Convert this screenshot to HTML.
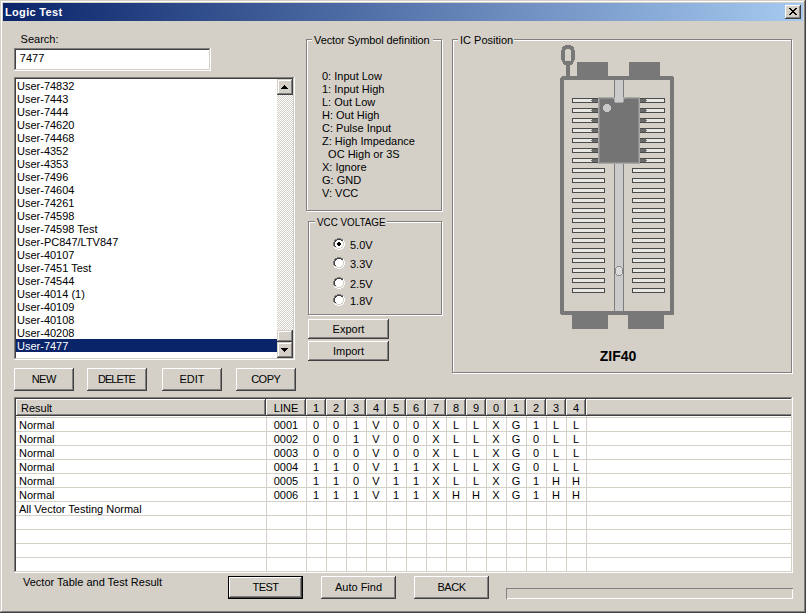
<!DOCTYPE html><html><head><meta charset="utf-8"><style>
html,body{margin:0;padding:0;width:806px;height:613px;overflow:hidden;background:#d4d0c8;}
#w div{position:absolute;box-sizing:border-box;}
.t{font-family:"Liberation Sans", sans-serif;font-size:11px;line-height:13px;white-space:pre;color:#000;}
</style></head><body><div id="w" style="position:relative;width:806px;height:613px;">
<div style="left:0px;top:0px;width:806px;height:613px;box-shadow:inset -1px -1px #404040,inset 1px 1px #d4d0c8,inset -2px -2px #808080,inset 2px 2px #fff;"></div>
<div style="left:3px;top:3px;width:800px;height:18px;background:linear-gradient(to right,#0a246a,#a6caf0);"></div>
<div class="t" style="left:5px;top:6px;font-weight:bold;color:#fff;letter-spacing:0.33px;">Logic Test</div>
<div style="left:785px;top:5px;width:16px;height:14px;background:#d4d0c8;box-shadow:inset -1px -1px #404040,inset 1px 1px #fff,inset -2px -2px #808080,inset 2px 2px #d4d0c8;"></div>
<svg style="position:absolute;left:789px;top:8px" width="8" height="7" shape-rendering="crispEdges"><path fill="#000" d="M0 0h2v1h-2zM6 0h2v1h-2zM1 1h2v1h-2zM5 1h2v1h-2zM2 2h4v1h-4zM3 3h2v1h-2zM2 4h4v1h-4zM1 5h2v1h-2zM5 5h2v1h-2zM0 6h2v1h-2zM6 6h2v1h-2z"/></svg>
<div class="t" style="left:20.6px;top:33px;">Search:</div>
<div style="left:14px;top:48px;width:197px;height:23px;background:#fff;box-shadow:inset -1px -1px #fff,inset 1px 1px #808080,inset -2px -2px #d4d0c8,inset 2px 2px #404040;"></div>
<div class="t" style="left:19.8px;top:52px;">7477</div>
<div style="left:14px;top:77px;width:281px;height:283px;background:#fff;box-shadow:inset -1px -1px #fff,inset 1px 1px #808080,inset -2px -2px #d4d0c8,inset 2px 2px #404040;"></div>
<div class="t" style="left:17px;top:80px;">User-74832</div>
<div class="t" style="left:17px;top:93px;">User-7443</div>
<div class="t" style="left:17px;top:106px;">User-7444</div>
<div class="t" style="left:17px;top:119px;">User-74620</div>
<div class="t" style="left:17px;top:132px;">User-74468</div>
<div class="t" style="left:17px;top:145px;">User-4352</div>
<div class="t" style="left:17px;top:158px;">User-4353</div>
<div class="t" style="left:17px;top:171px;">User-7496</div>
<div class="t" style="left:17px;top:184px;">User-74604</div>
<div class="t" style="left:17px;top:197px;">User-74261</div>
<div class="t" style="left:17px;top:210px;">User-74598</div>
<div class="t" style="left:17px;top:223px;">User-74598 Test</div>
<div class="t" style="left:17px;top:236px;">User-PC847/LTV847</div>
<div class="t" style="left:17px;top:249px;">User-40107</div>
<div class="t" style="left:17px;top:262px;">User-7451 Test</div>
<div class="t" style="left:17px;top:275px;">User-74544</div>
<div class="t" style="left:17px;top:288px;">User-4014 (1)</div>
<div class="t" style="left:17px;top:301px;">User-40109</div>
<div class="t" style="left:17px;top:314px;">User-40108</div>
<div class="t" style="left:17px;top:327px;">User-40208</div>
<div style="left:16px;top:339px;width:261px;height:13px;background:#0a246a;"></div>
<div class="t" style="left:17px;top:340px;color:#fff;">User-7477</div>
<div style="left:277px;top:95px;width:16px;height:235px;background-color:#fff;background-image:repeating-conic-gradient(#d4d0c8 0 25%,#fff 0 50%);background-size:2px 2px;"></div>
<div style="left:277px;top:79px;width:16px;height:16px;background:#d4d0c8;box-shadow:inset -1px -1px #404040,inset 1px 1px #d4d0c8,inset -2px -2px #808080,inset 2px 2px #fff;"></div>
<svg style="position:absolute;left:281px;top:85px" width="7" height="4" shape-rendering="crispEdges"><path fill="#000" d="M3 0h1v1h-1zM2 1h3v1h-3zM1 2h5v1h-5zM0 3h7v1h-7z"/></svg>
<div style="left:277px;top:330px;width:16px;height:12px;background:#d4d0c8;box-shadow:inset -1px -1px #404040,inset 1px 1px #d4d0c8,inset -2px -2px #808080,inset 2px 2px #fff;"></div>
<div style="left:277px;top:342px;width:16px;height:16px;background:#d4d0c8;box-shadow:inset -1px -1px #404040,inset 1px 1px #d4d0c8,inset -2px -2px #808080,inset 2px 2px #fff;"></div>
<svg style="position:absolute;left:281px;top:348px" width="7" height="4" shape-rendering="crispEdges"><path fill="#000" d="M0 0h7v1h-7zM1 1h5v1h-5zM2 2h3v1h-3zM3 3h1v1h-1z"/></svg>
<div style="left:14px;top:368px;width:60px;height:23px;background:#d4d0c8;box-shadow:inset -1px -1px #404040,inset 1px 1px #fff,inset -2px -2px #808080,inset 2px 2px #d4d0c8;"></div>
<div class="t" style="left:14px;width:60px;text-align:center;top:373px;letter-spacing:-0.5px;text-indent:-0.5px;">NEW</div>
<div style="left:87px;top:368px;width:60px;height:23px;background:#d4d0c8;box-shadow:inset -1px -1px #404040,inset 1px 1px #fff,inset -2px -2px #808080,inset 2px 2px #d4d0c8;"></div>
<div class="t" style="left:87px;width:60px;text-align:center;top:373px;letter-spacing:-1px;text-indent:-1px;">DELETE</div>
<div style="left:162px;top:368px;width:60px;height:23px;background:#d4d0c8;box-shadow:inset -1px -1px #404040,inset 1px 1px #fff,inset -2px -2px #808080,inset 2px 2px #d4d0c8;"></div>
<div class="t" style="left:162px;width:60px;text-align:center;top:373px;letter-spacing:0px;text-indent:0px;">EDIT</div>
<div style="left:236px;top:368px;width:60px;height:23px;background:#d4d0c8;box-shadow:inset -1px -1px #404040,inset 1px 1px #fff,inset -2px -2px #808080,inset 2px 2px #d4d0c8;"></div>
<div class="t" style="left:236px;width:60px;text-align:center;top:373px;letter-spacing:-0.5px;text-indent:-0.5px;">COPY</div>
<div style="left:307px;top:40px;width:136px;height:172px;border:1px solid #fff;"></div>
<div style="left:306px;top:39px;width:136px;height:172px;border:1px solid #808080;"></div>
<div style="left:312px;top:36px;width:121px;height:7px;background:#d4d0c8;"></div>
<div class="t" style="left:314px;top:34px;letter-spacing:-0.1px;">Vector Symbol definition</div>
<div class="t" style="left:322px;top:70px;">0: Input Low</div>
<div class="t" style="left:322px;top:83px;">1: Input High</div>
<div class="t" style="left:322px;top:96px;">L: Out Low</div>
<div class="t" style="left:322px;top:109px;">H: Out High</div>
<div class="t" style="left:322px;top:122px;">C: Pulse Input</div>
<div class="t" style="left:322px;top:135px;">Z: High Impedance</div>
<div class="t" style="left:322px;top:148px;">  OC High or 3S</div>
<div class="t" style="left:322px;top:161px;">X: Ignore</div>
<div class="t" style="left:322px;top:174px;">G: GND</div>
<div class="t" style="left:322px;top:187px;">V: VCC</div>
<div style="left:309px;top:222px;width:134px;height:94px;border:1px solid #fff;"></div>
<div style="left:308px;top:221px;width:134px;height:94px;border:1px solid #808080;"></div>
<div style="left:315px;top:218px;width:72px;height:7px;background:#d4d0c8;"></div>
<div class="t" style="left:317px;top:216px;transform:scaleX(0.895);transform-origin:0 0;">VCC VOLTAGE</div>
<svg style="position:absolute;left:333px;top:238px" width="12" height="12" shape-rendering="crispEdges"><path fill="#808080" d="M4 0h1v1h-1zM5 0h1v1h-1zM6 0h1v1h-1zM7 0h1v1h-1zM2 1h1v1h-1zM3 1h1v1h-1zM8 1h1v1h-1zM9 1h1v1h-1zM1 2h1v1h-1zM1 3h1v1h-1zM0 4h1v1h-1zM0 5h1v1h-1zM0 6h1v1h-1zM0 7h1v1h-1zM1 8h1v1h-1z"/><path fill="#404040" d="M4 1h1v1h-1zM5 1h1v1h-1zM6 1h1v1h-1zM7 1h1v1h-1zM2 2h1v1h-1zM3 2h1v1h-1zM8 2h1v1h-1zM9 2h1v1h-1zM2 3h1v1h-1zM1 4h1v1h-1zM1 5h1v1h-1zM1 6h1v1h-1zM1 7h1v1h-1zM2 8h1v1h-1z"/><path fill="#ffffff" d="M4 2h1v1h-1zM5 2h1v1h-1zM6 2h1v1h-1zM7 2h1v1h-1zM10 2h1v1h-1zM3 3h1v1h-1zM4 3h1v1h-1zM5 3h1v1h-1zM6 3h1v1h-1zM7 3h1v1h-1zM8 3h1v1h-1zM10 3h1v1h-1zM2 4h1v1h-1zM3 4h1v1h-1zM4 4h1v1h-1zM7 4h1v1h-1zM8 4h1v1h-1zM9 4h1v1h-1zM11 4h1v1h-1zM2 5h1v1h-1zM3 5h1v1h-1zM8 5h1v1h-1zM9 5h1v1h-1zM11 5h1v1h-1zM2 6h1v1h-1zM3 6h1v1h-1zM8 6h1v1h-1zM9 6h1v1h-1zM11 6h1v1h-1zM2 7h1v1h-1zM3 7h1v1h-1zM4 7h1v1h-1zM7 7h1v1h-1zM8 7h1v1h-1zM9 7h1v1h-1zM11 7h1v1h-1zM3 8h1v1h-1zM4 8h1v1h-1zM5 8h1v1h-1zM6 8h1v1h-1zM7 8h1v1h-1zM8 8h1v1h-1zM10 8h1v1h-1zM1 9h1v1h-1zM4 9h1v1h-1zM5 9h1v1h-1zM6 9h1v1h-1zM7 9h1v1h-1zM10 9h1v1h-1zM2 10h1v1h-1zM3 10h1v1h-1zM8 10h1v1h-1zM9 10h1v1h-1zM4 11h1v1h-1zM5 11h1v1h-1zM6 11h1v1h-1zM7 11h1v1h-1z"/><path fill="#d4d0c8" d="M9 3h1v1h-1zM10 4h1v1h-1zM10 5h1v1h-1zM10 6h1v1h-1zM10 7h1v1h-1zM9 8h1v1h-1zM2 9h1v1h-1zM3 9h1v1h-1zM8 9h1v1h-1zM9 9h1v1h-1zM4 10h1v1h-1zM5 10h1v1h-1zM6 10h1v1h-1zM7 10h1v1h-1z"/><path fill="#000000" d="M5 4h1v1h-1zM6 4h1v1h-1zM4 5h1v1h-1zM5 5h1v1h-1zM6 5h1v1h-1zM7 5h1v1h-1zM4 6h1v1h-1zM5 6h1v1h-1zM6 6h1v1h-1zM7 6h1v1h-1zM5 7h1v1h-1zM6 7h1v1h-1z"/></svg>
<div class="t" style="left:350px;top:239px;">5.0V</div>
<svg style="position:absolute;left:333px;top:257px" width="12" height="12" shape-rendering="crispEdges"><path fill="#808080" d="M4 0h1v1h-1zM5 0h1v1h-1zM6 0h1v1h-1zM7 0h1v1h-1zM2 1h1v1h-1zM3 1h1v1h-1zM8 1h1v1h-1zM9 1h1v1h-1zM1 2h1v1h-1zM1 3h1v1h-1zM0 4h1v1h-1zM0 5h1v1h-1zM0 6h1v1h-1zM0 7h1v1h-1zM1 8h1v1h-1z"/><path fill="#404040" d="M4 1h1v1h-1zM5 1h1v1h-1zM6 1h1v1h-1zM7 1h1v1h-1zM2 2h1v1h-1zM3 2h1v1h-1zM8 2h1v1h-1zM9 2h1v1h-1zM2 3h1v1h-1zM1 4h1v1h-1zM1 5h1v1h-1zM1 6h1v1h-1zM1 7h1v1h-1zM2 8h1v1h-1z"/><path fill="#ffffff" d="M4 2h1v1h-1zM5 2h1v1h-1zM6 2h1v1h-1zM7 2h1v1h-1zM10 2h1v1h-1zM3 3h1v1h-1zM4 3h1v1h-1zM5 3h1v1h-1zM6 3h1v1h-1zM7 3h1v1h-1zM8 3h1v1h-1zM10 3h1v1h-1zM2 4h1v1h-1zM3 4h1v1h-1zM4 4h1v1h-1zM5 4h1v1h-1zM6 4h1v1h-1zM7 4h1v1h-1zM8 4h1v1h-1zM9 4h1v1h-1zM11 4h1v1h-1zM2 5h1v1h-1zM3 5h1v1h-1zM4 5h1v1h-1zM5 5h1v1h-1zM6 5h1v1h-1zM7 5h1v1h-1zM8 5h1v1h-1zM9 5h1v1h-1zM11 5h1v1h-1zM2 6h1v1h-1zM3 6h1v1h-1zM4 6h1v1h-1zM5 6h1v1h-1zM6 6h1v1h-1zM7 6h1v1h-1zM8 6h1v1h-1zM9 6h1v1h-1zM11 6h1v1h-1zM2 7h1v1h-1zM3 7h1v1h-1zM4 7h1v1h-1zM5 7h1v1h-1zM6 7h1v1h-1zM7 7h1v1h-1zM8 7h1v1h-1zM9 7h1v1h-1zM11 7h1v1h-1zM3 8h1v1h-1zM4 8h1v1h-1zM5 8h1v1h-1zM6 8h1v1h-1zM7 8h1v1h-1zM8 8h1v1h-1zM10 8h1v1h-1zM1 9h1v1h-1zM4 9h1v1h-1zM5 9h1v1h-1zM6 9h1v1h-1zM7 9h1v1h-1zM10 9h1v1h-1zM2 10h1v1h-1zM3 10h1v1h-1zM8 10h1v1h-1zM9 10h1v1h-1zM4 11h1v1h-1zM5 11h1v1h-1zM6 11h1v1h-1zM7 11h1v1h-1z"/><path fill="#d4d0c8" d="M9 3h1v1h-1zM10 4h1v1h-1zM10 5h1v1h-1zM10 6h1v1h-1zM10 7h1v1h-1zM9 8h1v1h-1zM2 9h1v1h-1zM3 9h1v1h-1zM8 9h1v1h-1zM9 9h1v1h-1zM4 10h1v1h-1zM5 10h1v1h-1zM6 10h1v1h-1zM7 10h1v1h-1z"/></svg>
<div class="t" style="left:350px;top:258px;">3.3V</div>
<svg style="position:absolute;left:333px;top:277px" width="12" height="12" shape-rendering="crispEdges"><path fill="#808080" d="M4 0h1v1h-1zM5 0h1v1h-1zM6 0h1v1h-1zM7 0h1v1h-1zM2 1h1v1h-1zM3 1h1v1h-1zM8 1h1v1h-1zM9 1h1v1h-1zM1 2h1v1h-1zM1 3h1v1h-1zM0 4h1v1h-1zM0 5h1v1h-1zM0 6h1v1h-1zM0 7h1v1h-1zM1 8h1v1h-1z"/><path fill="#404040" d="M4 1h1v1h-1zM5 1h1v1h-1zM6 1h1v1h-1zM7 1h1v1h-1zM2 2h1v1h-1zM3 2h1v1h-1zM8 2h1v1h-1zM9 2h1v1h-1zM2 3h1v1h-1zM1 4h1v1h-1zM1 5h1v1h-1zM1 6h1v1h-1zM1 7h1v1h-1zM2 8h1v1h-1z"/><path fill="#ffffff" d="M4 2h1v1h-1zM5 2h1v1h-1zM6 2h1v1h-1zM7 2h1v1h-1zM10 2h1v1h-1zM3 3h1v1h-1zM4 3h1v1h-1zM5 3h1v1h-1zM6 3h1v1h-1zM7 3h1v1h-1zM8 3h1v1h-1zM10 3h1v1h-1zM2 4h1v1h-1zM3 4h1v1h-1zM4 4h1v1h-1zM5 4h1v1h-1zM6 4h1v1h-1zM7 4h1v1h-1zM8 4h1v1h-1zM9 4h1v1h-1zM11 4h1v1h-1zM2 5h1v1h-1zM3 5h1v1h-1zM4 5h1v1h-1zM5 5h1v1h-1zM6 5h1v1h-1zM7 5h1v1h-1zM8 5h1v1h-1zM9 5h1v1h-1zM11 5h1v1h-1zM2 6h1v1h-1zM3 6h1v1h-1zM4 6h1v1h-1zM5 6h1v1h-1zM6 6h1v1h-1zM7 6h1v1h-1zM8 6h1v1h-1zM9 6h1v1h-1zM11 6h1v1h-1zM2 7h1v1h-1zM3 7h1v1h-1zM4 7h1v1h-1zM5 7h1v1h-1zM6 7h1v1h-1zM7 7h1v1h-1zM8 7h1v1h-1zM9 7h1v1h-1zM11 7h1v1h-1zM3 8h1v1h-1zM4 8h1v1h-1zM5 8h1v1h-1zM6 8h1v1h-1zM7 8h1v1h-1zM8 8h1v1h-1zM10 8h1v1h-1zM1 9h1v1h-1zM4 9h1v1h-1zM5 9h1v1h-1zM6 9h1v1h-1zM7 9h1v1h-1zM10 9h1v1h-1zM2 10h1v1h-1zM3 10h1v1h-1zM8 10h1v1h-1zM9 10h1v1h-1zM4 11h1v1h-1zM5 11h1v1h-1zM6 11h1v1h-1zM7 11h1v1h-1z"/><path fill="#d4d0c8" d="M9 3h1v1h-1zM10 4h1v1h-1zM10 5h1v1h-1zM10 6h1v1h-1zM10 7h1v1h-1zM9 8h1v1h-1zM2 9h1v1h-1zM3 9h1v1h-1zM8 9h1v1h-1zM9 9h1v1h-1zM4 10h1v1h-1zM5 10h1v1h-1zM6 10h1v1h-1zM7 10h1v1h-1z"/></svg>
<div class="t" style="left:350px;top:278px;">2.5V</div>
<svg style="position:absolute;left:333px;top:294px" width="12" height="12" shape-rendering="crispEdges"><path fill="#808080" d="M4 0h1v1h-1zM5 0h1v1h-1zM6 0h1v1h-1zM7 0h1v1h-1zM2 1h1v1h-1zM3 1h1v1h-1zM8 1h1v1h-1zM9 1h1v1h-1zM1 2h1v1h-1zM1 3h1v1h-1zM0 4h1v1h-1zM0 5h1v1h-1zM0 6h1v1h-1zM0 7h1v1h-1zM1 8h1v1h-1z"/><path fill="#404040" d="M4 1h1v1h-1zM5 1h1v1h-1zM6 1h1v1h-1zM7 1h1v1h-1zM2 2h1v1h-1zM3 2h1v1h-1zM8 2h1v1h-1zM9 2h1v1h-1zM2 3h1v1h-1zM1 4h1v1h-1zM1 5h1v1h-1zM1 6h1v1h-1zM1 7h1v1h-1zM2 8h1v1h-1z"/><path fill="#ffffff" d="M4 2h1v1h-1zM5 2h1v1h-1zM6 2h1v1h-1zM7 2h1v1h-1zM10 2h1v1h-1zM3 3h1v1h-1zM4 3h1v1h-1zM5 3h1v1h-1zM6 3h1v1h-1zM7 3h1v1h-1zM8 3h1v1h-1zM10 3h1v1h-1zM2 4h1v1h-1zM3 4h1v1h-1zM4 4h1v1h-1zM5 4h1v1h-1zM6 4h1v1h-1zM7 4h1v1h-1zM8 4h1v1h-1zM9 4h1v1h-1zM11 4h1v1h-1zM2 5h1v1h-1zM3 5h1v1h-1zM4 5h1v1h-1zM5 5h1v1h-1zM6 5h1v1h-1zM7 5h1v1h-1zM8 5h1v1h-1zM9 5h1v1h-1zM11 5h1v1h-1zM2 6h1v1h-1zM3 6h1v1h-1zM4 6h1v1h-1zM5 6h1v1h-1zM6 6h1v1h-1zM7 6h1v1h-1zM8 6h1v1h-1zM9 6h1v1h-1zM11 6h1v1h-1zM2 7h1v1h-1zM3 7h1v1h-1zM4 7h1v1h-1zM5 7h1v1h-1zM6 7h1v1h-1zM7 7h1v1h-1zM8 7h1v1h-1zM9 7h1v1h-1zM11 7h1v1h-1zM3 8h1v1h-1zM4 8h1v1h-1zM5 8h1v1h-1zM6 8h1v1h-1zM7 8h1v1h-1zM8 8h1v1h-1zM10 8h1v1h-1zM1 9h1v1h-1zM4 9h1v1h-1zM5 9h1v1h-1zM6 9h1v1h-1zM7 9h1v1h-1zM10 9h1v1h-1zM2 10h1v1h-1zM3 10h1v1h-1zM8 10h1v1h-1zM9 10h1v1h-1zM4 11h1v1h-1zM5 11h1v1h-1zM6 11h1v1h-1zM7 11h1v1h-1z"/><path fill="#d4d0c8" d="M9 3h1v1h-1zM10 4h1v1h-1zM10 5h1v1h-1zM10 6h1v1h-1zM10 7h1v1h-1zM9 8h1v1h-1zM2 9h1v1h-1zM3 9h1v1h-1zM8 9h1v1h-1zM9 9h1v1h-1zM4 10h1v1h-1zM5 10h1v1h-1zM6 10h1v1h-1zM7 10h1v1h-1z"/></svg>
<div class="t" style="left:350px;top:295px;">1.8V</div>
<div style="left:308px;top:319px;width:81px;height:20px;background:#d4d0c8;box-shadow:inset -1px -1px #404040,inset 1px 1px #fff,inset -2px -2px #808080,inset 2px 2px #d4d0c8;"></div>
<div class="t" style="left:308px;width:81px;text-align:center;top:323px;">Export</div>
<div style="left:308px;top:341px;width:81px;height:20px;background:#d4d0c8;box-shadow:inset -1px -1px #404040,inset 1px 1px #fff,inset -2px -2px #808080,inset 2px 2px #d4d0c8;"></div>
<div class="t" style="left:308px;width:81px;text-align:center;top:345px;">Import</div>
<div style="left:453px;top:40px;width:340px;height:334px;border:1px solid #fff;"></div>
<div style="left:452px;top:39px;width:340px;height:334px;border:1px solid #808080;"></div>
<div style="left:458px;top:36px;width:56px;height:7px;background:#d4d0c8;"></div>
<div class="t" style="left:460px;top:34px;">IC Position</div>
<svg style="position:absolute;left:0;top:0" width="806" height="613" shape-rendering="crispEdges"><path fill="#787878" d="M565 45h6v1h-6zM563 46h10v1h-10zM562 47h12v1h-12zM562 48h12v1h-12zM562 49h4v1h-4zM570 49h4v1h-4zM561 50h4v1h-4zM571 50h4v1h-4zM561 51h4v1h-4zM571 51h4v1h-4zM561 52h4v1h-4zM571 52h4v1h-4zM561 53h4v1h-4zM571 53h4v1h-4zM561 54h4v1h-4zM571 54h4v1h-4zM561 55h4v1h-4zM571 55h4v1h-4zM561 56h4v1h-4zM571 56h4v1h-4zM561 57h4v1h-4zM571 57h4v1h-4zM561 58h4v1h-4zM571 58h4v1h-4zM561 59h4v1h-4zM571 59h4v1h-4zM562 60h3v1h-3zM571 60h3v1h-3zM562 61h12v1h-12zM563 62h10v1h-10zM563 63h10v1h-10zM564 64h8v1h-8z"/><rect x="566" y="65" width="4" height="11" fill="#787878"/><rect x="577" y="62" width="31" height="14" fill="#787878"/><rect x="629" y="62" width="31" height="14" fill="#787878"/><rect x="562" y="76" width="111" height="1" fill="#787878"/><rect x="561" y="77" width="113" height="3" fill="#787878"/><rect x="560" y="78" width="4" height="236" fill="#787878"/><rect x="670" y="77" width="4" height="237" fill="#787878"/><rect x="561" y="311" width="113" height="4" fill="#787878"/><rect x="560" y="311" width="113" height="3" fill="#787878"/><rect x="572" y="315" width="36" height="14" fill="#787878"/><rect x="628" y="315" width="36" height="14" fill="#787878"/><rect x="614" y="80" width="10" height="231" fill="#7c7c7c"/><rect x="615" y="80" width="8" height="231" fill="#cbcbcb"/><path fill="#8a8a8a" d="M617 266h4v1h-4zM616 267h1v1h-1zM621 267h1v1h-1zM615 268h1v1h-1zM622 268h1v1h-1zM615 269h1v1h-1zM622 269h1v1h-1zM615 270h1v1h-1zM622 270h1v1h-1zM615 271h1v1h-1zM622 271h1v1h-1zM615 272h1v1h-1zM622 272h1v1h-1zM615 273h1v1h-1zM622 273h1v1h-1zM616 274h1v1h-1zM621 274h1v1h-1zM617 275h4v1h-4z"/><path fill="#dadada" d="M615 267h1v1h-1zM617 267h4v1h-4zM622 267h1v1h-1zM616 268h6v1h-6zM616 269h6v1h-6zM616 270h6v1h-6zM616 271h6v1h-6zM616 272h6v1h-6zM616 273h6v1h-6zM615 274h1v1h-1zM617 274h4v1h-4zM622 274h1v1h-1z"/><rect x="572" y="98" width="33" height="5" fill="#4a4a4a"/><rect x="573" y="99" width="31" height="3" fill="#e8e6e0"/><rect x="632" y="98" width="33" height="5" fill="#4a4a4a"/><rect x="633" y="99" width="31" height="3" fill="#e8e6e0"/><rect x="572" y="108" width="33" height="5" fill="#4a4a4a"/><rect x="573" y="109" width="31" height="3" fill="#e8e6e0"/><rect x="632" y="108" width="33" height="5" fill="#4a4a4a"/><rect x="633" y="109" width="31" height="3" fill="#e8e6e0"/><rect x="572" y="118" width="33" height="5" fill="#4a4a4a"/><rect x="573" y="119" width="31" height="3" fill="#e8e6e0"/><rect x="632" y="118" width="33" height="5" fill="#4a4a4a"/><rect x="633" y="119" width="31" height="3" fill="#e8e6e0"/><rect x="572" y="128" width="33" height="5" fill="#4a4a4a"/><rect x="573" y="129" width="31" height="3" fill="#e8e6e0"/><rect x="632" y="128" width="33" height="5" fill="#4a4a4a"/><rect x="633" y="129" width="31" height="3" fill="#e8e6e0"/><rect x="572" y="138" width="33" height="5" fill="#4a4a4a"/><rect x="573" y="139" width="31" height="3" fill="#e8e6e0"/><rect x="632" y="138" width="33" height="5" fill="#4a4a4a"/><rect x="633" y="139" width="31" height="3" fill="#e8e6e0"/><rect x="572" y="148" width="33" height="5" fill="#4a4a4a"/><rect x="573" y="149" width="31" height="3" fill="#e8e6e0"/><rect x="632" y="148" width="33" height="5" fill="#4a4a4a"/><rect x="633" y="149" width="31" height="3" fill="#e8e6e0"/><rect x="572" y="158" width="33" height="5" fill="#4a4a4a"/><rect x="573" y="159" width="31" height="3" fill="#e8e6e0"/><rect x="632" y="158" width="33" height="5" fill="#4a4a4a"/><rect x="633" y="159" width="31" height="3" fill="#e8e6e0"/><rect x="572" y="168" width="33" height="5" fill="#4a4a4a"/><rect x="573" y="169" width="31" height="3" fill="#e8e6e0"/><rect x="632" y="168" width="33" height="5" fill="#4a4a4a"/><rect x="633" y="169" width="31" height="3" fill="#e8e6e0"/><rect x="572" y="178" width="33" height="5" fill="#4a4a4a"/><rect x="573" y="179" width="31" height="3" fill="#e8e6e0"/><rect x="632" y="178" width="33" height="5" fill="#4a4a4a"/><rect x="633" y="179" width="31" height="3" fill="#e8e6e0"/><rect x="572" y="188" width="33" height="5" fill="#4a4a4a"/><rect x="573" y="189" width="31" height="3" fill="#e8e6e0"/><rect x="632" y="188" width="33" height="5" fill="#4a4a4a"/><rect x="633" y="189" width="31" height="3" fill="#e8e6e0"/><rect x="572" y="198" width="33" height="5" fill="#4a4a4a"/><rect x="573" y="199" width="31" height="3" fill="#e8e6e0"/><rect x="632" y="198" width="33" height="5" fill="#4a4a4a"/><rect x="633" y="199" width="31" height="3" fill="#e8e6e0"/><rect x="572" y="208" width="33" height="5" fill="#4a4a4a"/><rect x="573" y="209" width="31" height="3" fill="#e8e6e0"/><rect x="632" y="208" width="33" height="5" fill="#4a4a4a"/><rect x="633" y="209" width="31" height="3" fill="#e8e6e0"/><rect x="572" y="218" width="33" height="5" fill="#4a4a4a"/><rect x="573" y="219" width="31" height="3" fill="#e8e6e0"/><rect x="632" y="218" width="33" height="5" fill="#4a4a4a"/><rect x="633" y="219" width="31" height="3" fill="#e8e6e0"/><rect x="572" y="228" width="33" height="5" fill="#4a4a4a"/><rect x="573" y="229" width="31" height="3" fill="#e8e6e0"/><rect x="632" y="228" width="33" height="5" fill="#4a4a4a"/><rect x="633" y="229" width="31" height="3" fill="#e8e6e0"/><rect x="572" y="238" width="33" height="5" fill="#4a4a4a"/><rect x="573" y="239" width="31" height="3" fill="#e8e6e0"/><rect x="632" y="238" width="33" height="5" fill="#4a4a4a"/><rect x="633" y="239" width="31" height="3" fill="#e8e6e0"/><rect x="572" y="248" width="33" height="5" fill="#4a4a4a"/><rect x="573" y="249" width="31" height="3" fill="#e8e6e0"/><rect x="632" y="248" width="33" height="5" fill="#4a4a4a"/><rect x="633" y="249" width="31" height="3" fill="#e8e6e0"/><rect x="572" y="258" width="33" height="5" fill="#4a4a4a"/><rect x="573" y="259" width="31" height="3" fill="#e8e6e0"/><rect x="632" y="258" width="33" height="5" fill="#4a4a4a"/><rect x="633" y="259" width="31" height="3" fill="#e8e6e0"/><rect x="572" y="268" width="33" height="5" fill="#4a4a4a"/><rect x="573" y="269" width="31" height="3" fill="#e8e6e0"/><rect x="632" y="268" width="33" height="5" fill="#4a4a4a"/><rect x="633" y="269" width="31" height="3" fill="#e8e6e0"/><rect x="572" y="278" width="33" height="5" fill="#4a4a4a"/><rect x="573" y="279" width="31" height="3" fill="#e8e6e0"/><rect x="632" y="278" width="33" height="5" fill="#4a4a4a"/><rect x="633" y="279" width="31" height="3" fill="#e8e6e0"/><rect x="572" y="288" width="33" height="5" fill="#4a4a4a"/><rect x="573" y="289" width="31" height="3" fill="#e8e6e0"/><rect x="632" y="288" width="33" height="5" fill="#4a4a4a"/><rect x="633" y="289" width="31" height="3" fill="#e8e6e0"/><rect x="598" y="97" width="42" height="67" fill="#a8a8a8"/><rect x="599" y="98" width="40" height="65" fill="#8c8c8c"/><rect x="600" y="99" width="38" height="63" fill="#747474"/><rect x="614" y="97" width="10" height="5" fill="#a8a8a8"/><rect x="615" y="102" width="8" height="1" fill="#a8a8a8"/><rect x="613" y="98" width="1" height="1" fill="#a8a8a8"/><rect x="624" y="98" width="1" height="1" fill="#a8a8a8"/><rect x="615" y="97" width="8" height="5" fill="#cbcbcb"/><path fill="#c8c8c8" d="M605 104h4v1h-4zM604 105h6v1h-6zM603 106h8v1h-8zM603 107h8v1h-8zM603 108h8v1h-8zM603 109h8v1h-8zM604 110h6v1h-6zM605 111h4v1h-4z"/><rect x="592" y="99" width="6" height="3" fill="#6a6a6a"/><rect x="591" y="100" width="1" height="1" fill="#6a6a6a"/><rect x="640" y="99" width="6" height="3" fill="#6a6a6a"/><rect x="646" y="100" width="1" height="1" fill="#6a6a6a"/><rect x="592" y="109" width="6" height="3" fill="#6a6a6a"/><rect x="591" y="110" width="1" height="1" fill="#6a6a6a"/><rect x="640" y="109" width="6" height="3" fill="#6a6a6a"/><rect x="646" y="110" width="1" height="1" fill="#6a6a6a"/><rect x="592" y="119" width="6" height="3" fill="#6a6a6a"/><rect x="591" y="120" width="1" height="1" fill="#6a6a6a"/><rect x="640" y="119" width="6" height="3" fill="#6a6a6a"/><rect x="646" y="120" width="1" height="1" fill="#6a6a6a"/><rect x="592" y="129" width="6" height="3" fill="#6a6a6a"/><rect x="591" y="130" width="1" height="1" fill="#6a6a6a"/><rect x="640" y="129" width="6" height="3" fill="#6a6a6a"/><rect x="646" y="130" width="1" height="1" fill="#6a6a6a"/><rect x="592" y="139" width="6" height="3" fill="#6a6a6a"/><rect x="591" y="140" width="1" height="1" fill="#6a6a6a"/><rect x="640" y="139" width="6" height="3" fill="#6a6a6a"/><rect x="646" y="140" width="1" height="1" fill="#6a6a6a"/><rect x="592" y="149" width="6" height="3" fill="#6a6a6a"/><rect x="591" y="150" width="1" height="1" fill="#6a6a6a"/><rect x="640" y="149" width="6" height="3" fill="#6a6a6a"/><rect x="646" y="150" width="1" height="1" fill="#6a6a6a"/><rect x="592" y="159" width="6" height="3" fill="#6a6a6a"/><rect x="591" y="160" width="1" height="1" fill="#6a6a6a"/><rect x="640" y="159" width="6" height="3" fill="#6a6a6a"/><rect x="646" y="160" width="1" height="1" fill="#6a6a6a"/></svg>
<div class="t" style="left:561px;width:114px;text-align:center;top:348px;font-weight:bold;font-size:14px;line-height:16px;">ZIF40</div>
<div style="left:14px;top:397px;width:779px;height:176px;background:#fff;box-shadow:inset -1px -1px #fff,inset 1px 1px #808080,inset -2px -2px #d4d0c8,inset 2px 2px #404040;"></div>
<div style="left:16px;top:399px;width:775px;height:172px;overflow:hidden;">
<div style="left:0px;top:0;width:250px;height:17px;background:#d4d0c8;box-shadow:inset -1px -1px #404040,inset 1px 1px #fff,inset -2px -2px #808080,inset 2px 2px #d4d0c8;"></div><div class="t" style="left:5px;top:3px;">Result</div><div style="left:250px;top:0;width:40px;height:17px;background:#d4d0c8;box-shadow:inset -1px -1px #404040,inset 1px 1px #fff,inset -2px -2px #808080,inset 2px 2px #d4d0c8;"></div><div class="t" style="left:250px;width:40px;text-align:center;top:3px;">LINE</div><div style="left:290px;top:0;width:20px;height:17px;background:#d4d0c8;box-shadow:inset -1px -1px #404040,inset 1px 1px #fff,inset -2px -2px #808080,inset 2px 2px #d4d0c8;"></div><div class="t" style="left:290px;width:20px;text-align:center;top:3px;">1</div><div style="left:310px;top:0;width:20px;height:17px;background:#d4d0c8;box-shadow:inset -1px -1px #404040,inset 1px 1px #fff,inset -2px -2px #808080,inset 2px 2px #d4d0c8;"></div><div class="t" style="left:310px;width:20px;text-align:center;top:3px;">2</div><div style="left:330px;top:0;width:20px;height:17px;background:#d4d0c8;box-shadow:inset -1px -1px #404040,inset 1px 1px #fff,inset -2px -2px #808080,inset 2px 2px #d4d0c8;"></div><div class="t" style="left:330px;width:20px;text-align:center;top:3px;">3</div><div style="left:350px;top:0;width:20px;height:17px;background:#d4d0c8;box-shadow:inset -1px -1px #404040,inset 1px 1px #fff,inset -2px -2px #808080,inset 2px 2px #d4d0c8;"></div><div class="t" style="left:350px;width:20px;text-align:center;top:3px;">4</div><div style="left:370px;top:0;width:20px;height:17px;background:#d4d0c8;box-shadow:inset -1px -1px #404040,inset 1px 1px #fff,inset -2px -2px #808080,inset 2px 2px #d4d0c8;"></div><div class="t" style="left:370px;width:20px;text-align:center;top:3px;">5</div><div style="left:390px;top:0;width:20px;height:17px;background:#d4d0c8;box-shadow:inset -1px -1px #404040,inset 1px 1px #fff,inset -2px -2px #808080,inset 2px 2px #d4d0c8;"></div><div class="t" style="left:390px;width:20px;text-align:center;top:3px;">6</div><div style="left:410px;top:0;width:20px;height:17px;background:#d4d0c8;box-shadow:inset -1px -1px #404040,inset 1px 1px #fff,inset -2px -2px #808080,inset 2px 2px #d4d0c8;"></div><div class="t" style="left:410px;width:20px;text-align:center;top:3px;">7</div><div style="left:430px;top:0;width:20px;height:17px;background:#d4d0c8;box-shadow:inset -1px -1px #404040,inset 1px 1px #fff,inset -2px -2px #808080,inset 2px 2px #d4d0c8;"></div><div class="t" style="left:430px;width:20px;text-align:center;top:3px;">8</div><div style="left:450px;top:0;width:20px;height:17px;background:#d4d0c8;box-shadow:inset -1px -1px #404040,inset 1px 1px #fff,inset -2px -2px #808080,inset 2px 2px #d4d0c8;"></div><div class="t" style="left:450px;width:20px;text-align:center;top:3px;">9</div><div style="left:470px;top:0;width:20px;height:17px;background:#d4d0c8;box-shadow:inset -1px -1px #404040,inset 1px 1px #fff,inset -2px -2px #808080,inset 2px 2px #d4d0c8;"></div><div class="t" style="left:470px;width:20px;text-align:center;top:3px;">0</div><div style="left:490px;top:0;width:20px;height:17px;background:#d4d0c8;box-shadow:inset -1px -1px #404040,inset 1px 1px #fff,inset -2px -2px #808080,inset 2px 2px #d4d0c8;"></div><div class="t" style="left:490px;width:20px;text-align:center;top:3px;">1</div><div style="left:510px;top:0;width:20px;height:17px;background:#d4d0c8;box-shadow:inset -1px -1px #404040,inset 1px 1px #fff,inset -2px -2px #808080,inset 2px 2px #d4d0c8;"></div><div class="t" style="left:510px;width:20px;text-align:center;top:3px;">2</div><div style="left:530px;top:0;width:20px;height:17px;background:#d4d0c8;box-shadow:inset -1px -1px #404040,inset 1px 1px #fff,inset -2px -2px #808080,inset 2px 2px #d4d0c8;"></div><div class="t" style="left:530px;width:20px;text-align:center;top:3px;">3</div><div style="left:550px;top:0;width:20px;height:17px;background:#d4d0c8;box-shadow:inset -1px -1px #404040,inset 1px 1px #fff,inset -2px -2px #808080,inset 2px 2px #d4d0c8;"></div><div class="t" style="left:550px;width:20px;text-align:center;top:3px;">4</div><div style="left:570px;top:0;width:215px;height:17px;background:#d4d0c8;box-shadow:inset -1px -1px #404040,inset 1px 1px #fff,inset -2px -2px #808080,inset 2px 2px #d4d0c8;"></div><div style="left:0;top:18px;width:775px;height:1px;background:#d4d0c8;"></div><div style="left:0;top:32px;width:775px;height:1px;background:#d4d0c8;"></div><div style="left:0;top:46px;width:775px;height:1px;background:#d4d0c8;"></div><div style="left:0;top:60px;width:775px;height:1px;background:#d4d0c8;"></div><div style="left:0;top:74px;width:775px;height:1px;background:#d4d0c8;"></div><div style="left:0;top:88px;width:775px;height:1px;background:#d4d0c8;"></div><div style="left:0;top:102px;width:775px;height:1px;background:#d4d0c8;"></div><div style="left:0;top:116px;width:775px;height:1px;background:#d4d0c8;"></div><div style="left:0;top:130px;width:775px;height:1px;background:#d4d0c8;"></div><div style="left:0;top:144px;width:775px;height:1px;background:#d4d0c8;"></div><div style="left:0;top:158px;width:775px;height:1px;background:#d4d0c8;"></div><div style="left:250px;top:17px;width:1px;height:160px;background:#d4d0c8;"></div><div style="left:290px;top:17px;width:1px;height:160px;background:#d4d0c8;"></div><div style="left:310px;top:17px;width:1px;height:160px;background:#d4d0c8;"></div><div style="left:330px;top:17px;width:1px;height:160px;background:#d4d0c8;"></div><div style="left:350px;top:17px;width:1px;height:160px;background:#d4d0c8;"></div><div style="left:370px;top:17px;width:1px;height:160px;background:#d4d0c8;"></div><div style="left:390px;top:17px;width:1px;height:160px;background:#d4d0c8;"></div><div style="left:410px;top:17px;width:1px;height:160px;background:#d4d0c8;"></div><div style="left:430px;top:17px;width:1px;height:160px;background:#d4d0c8;"></div><div style="left:450px;top:17px;width:1px;height:160px;background:#d4d0c8;"></div><div style="left:470px;top:17px;width:1px;height:160px;background:#d4d0c8;"></div><div style="left:490px;top:17px;width:1px;height:160px;background:#d4d0c8;"></div><div style="left:510px;top:17px;width:1px;height:160px;background:#d4d0c8;"></div><div style="left:530px;top:17px;width:1px;height:160px;background:#d4d0c8;"></div><div style="left:550px;top:17px;width:1px;height:160px;background:#d4d0c8;"></div><div style="left:570px;top:17px;width:1px;height:160px;background:#d4d0c8;"></div><div class="t" style="left:3px;top:20px;">Normal</div><div class="t" style="left:250px;width:40px;text-align:center;top:20px;">0001</div><div class="t" style="left:290px;width:20px;text-align:center;top:20px;">0</div><div class="t" style="left:310px;width:20px;text-align:center;top:20px;">0</div><div class="t" style="left:330px;width:20px;text-align:center;top:20px;">1</div><div class="t" style="left:350px;width:20px;text-align:center;top:20px;">V</div><div class="t" style="left:370px;width:20px;text-align:center;top:20px;">0</div><div class="t" style="left:390px;width:20px;text-align:center;top:20px;">0</div><div class="t" style="left:410px;width:20px;text-align:center;top:20px;">X</div><div class="t" style="left:430px;width:20px;text-align:center;top:20px;">L</div><div class="t" style="left:450px;width:20px;text-align:center;top:20px;">L</div><div class="t" style="left:470px;width:20px;text-align:center;top:20px;">X</div><div class="t" style="left:490px;width:20px;text-align:center;top:20px;">G</div><div class="t" style="left:510px;width:20px;text-align:center;top:20px;">1</div><div class="t" style="left:530px;width:20px;text-align:center;top:20px;">L</div><div class="t" style="left:550px;width:20px;text-align:center;top:20px;">L</div><div class="t" style="left:3px;top:34px;">Normal</div><div class="t" style="left:250px;width:40px;text-align:center;top:34px;">0002</div><div class="t" style="left:290px;width:20px;text-align:center;top:34px;">0</div><div class="t" style="left:310px;width:20px;text-align:center;top:34px;">0</div><div class="t" style="left:330px;width:20px;text-align:center;top:34px;">1</div><div class="t" style="left:350px;width:20px;text-align:center;top:34px;">V</div><div class="t" style="left:370px;width:20px;text-align:center;top:34px;">0</div><div class="t" style="left:390px;width:20px;text-align:center;top:34px;">0</div><div class="t" style="left:410px;width:20px;text-align:center;top:34px;">X</div><div class="t" style="left:430px;width:20px;text-align:center;top:34px;">L</div><div class="t" style="left:450px;width:20px;text-align:center;top:34px;">L</div><div class="t" style="left:470px;width:20px;text-align:center;top:34px;">X</div><div class="t" style="left:490px;width:20px;text-align:center;top:34px;">G</div><div class="t" style="left:510px;width:20px;text-align:center;top:34px;">0</div><div class="t" style="left:530px;width:20px;text-align:center;top:34px;">L</div><div class="t" style="left:550px;width:20px;text-align:center;top:34px;">L</div><div class="t" style="left:3px;top:48px;">Normal</div><div class="t" style="left:250px;width:40px;text-align:center;top:48px;">0003</div><div class="t" style="left:290px;width:20px;text-align:center;top:48px;">0</div><div class="t" style="left:310px;width:20px;text-align:center;top:48px;">0</div><div class="t" style="left:330px;width:20px;text-align:center;top:48px;">0</div><div class="t" style="left:350px;width:20px;text-align:center;top:48px;">V</div><div class="t" style="left:370px;width:20px;text-align:center;top:48px;">0</div><div class="t" style="left:390px;width:20px;text-align:center;top:48px;">0</div><div class="t" style="left:410px;width:20px;text-align:center;top:48px;">X</div><div class="t" style="left:430px;width:20px;text-align:center;top:48px;">L</div><div class="t" style="left:450px;width:20px;text-align:center;top:48px;">L</div><div class="t" style="left:470px;width:20px;text-align:center;top:48px;">X</div><div class="t" style="left:490px;width:20px;text-align:center;top:48px;">G</div><div class="t" style="left:510px;width:20px;text-align:center;top:48px;">0</div><div class="t" style="left:530px;width:20px;text-align:center;top:48px;">L</div><div class="t" style="left:550px;width:20px;text-align:center;top:48px;">L</div><div class="t" style="left:3px;top:62px;">Normal</div><div class="t" style="left:250px;width:40px;text-align:center;top:62px;">0004</div><div class="t" style="left:290px;width:20px;text-align:center;top:62px;">1</div><div class="t" style="left:310px;width:20px;text-align:center;top:62px;">1</div><div class="t" style="left:330px;width:20px;text-align:center;top:62px;">0</div><div class="t" style="left:350px;width:20px;text-align:center;top:62px;">V</div><div class="t" style="left:370px;width:20px;text-align:center;top:62px;">1</div><div class="t" style="left:390px;width:20px;text-align:center;top:62px;">1</div><div class="t" style="left:410px;width:20px;text-align:center;top:62px;">X</div><div class="t" style="left:430px;width:20px;text-align:center;top:62px;">L</div><div class="t" style="left:450px;width:20px;text-align:center;top:62px;">L</div><div class="t" style="left:470px;width:20px;text-align:center;top:62px;">X</div><div class="t" style="left:490px;width:20px;text-align:center;top:62px;">G</div><div class="t" style="left:510px;width:20px;text-align:center;top:62px;">0</div><div class="t" style="left:530px;width:20px;text-align:center;top:62px;">L</div><div class="t" style="left:550px;width:20px;text-align:center;top:62px;">L</div><div class="t" style="left:3px;top:76px;">Normal</div><div class="t" style="left:250px;width:40px;text-align:center;top:76px;">0005</div><div class="t" style="left:290px;width:20px;text-align:center;top:76px;">1</div><div class="t" style="left:310px;width:20px;text-align:center;top:76px;">1</div><div class="t" style="left:330px;width:20px;text-align:center;top:76px;">0</div><div class="t" style="left:350px;width:20px;text-align:center;top:76px;">V</div><div class="t" style="left:370px;width:20px;text-align:center;top:76px;">1</div><div class="t" style="left:390px;width:20px;text-align:center;top:76px;">1</div><div class="t" style="left:410px;width:20px;text-align:center;top:76px;">X</div><div class="t" style="left:430px;width:20px;text-align:center;top:76px;">L</div><div class="t" style="left:450px;width:20px;text-align:center;top:76px;">L</div><div class="t" style="left:470px;width:20px;text-align:center;top:76px;">X</div><div class="t" style="left:490px;width:20px;text-align:center;top:76px;">G</div><div class="t" style="left:510px;width:20px;text-align:center;top:76px;">1</div><div class="t" style="left:530px;width:20px;text-align:center;top:76px;">H</div><div class="t" style="left:550px;width:20px;text-align:center;top:76px;">H</div><div class="t" style="left:3px;top:90px;">Normal</div><div class="t" style="left:250px;width:40px;text-align:center;top:90px;">0006</div><div class="t" style="left:290px;width:20px;text-align:center;top:90px;">1</div><div class="t" style="left:310px;width:20px;text-align:center;top:90px;">1</div><div class="t" style="left:330px;width:20px;text-align:center;top:90px;">1</div><div class="t" style="left:350px;width:20px;text-align:center;top:90px;">V</div><div class="t" style="left:370px;width:20px;text-align:center;top:90px;">1</div><div class="t" style="left:390px;width:20px;text-align:center;top:90px;">1</div><div class="t" style="left:410px;width:20px;text-align:center;top:90px;">X</div><div class="t" style="left:430px;width:20px;text-align:center;top:90px;">H</div><div class="t" style="left:450px;width:20px;text-align:center;top:90px;">H</div><div class="t" style="left:470px;width:20px;text-align:center;top:90px;">X</div><div class="t" style="left:490px;width:20px;text-align:center;top:90px;">G</div><div class="t" style="left:510px;width:20px;text-align:center;top:90px;">1</div><div class="t" style="left:530px;width:20px;text-align:center;top:90px;">H</div><div class="t" style="left:550px;width:20px;text-align:center;top:90px;">H</div><div class="t" style="left:3px;top:104px;">All Vector Testing Normal</div>
</div>
<div class="t" style="left:23px;top:576px;">Vector Table and Test Result</div>
<div style="left:228px;top:576px;width:75px;height:23px;background:#d4d0c8;box-shadow:inset -1px -1px #000,inset 1px 1px #000,inset -2px -2px #404040,inset 2px 2px #fff,inset -3px -3px #808080;"></div>
<div class="t" style="left:228px;width:75px;text-align:center;top:581px;letter-spacing:-0.5px;">TEST</div>
<div style="left:321px;top:576px;width:75px;height:23px;background:#d4d0c8;box-shadow:inset -1px -1px #404040,inset 1px 1px #fff,inset -2px -2px #808080,inset 2px 2px #d4d0c8;"></div>
<div class="t" style="left:321px;width:75px;text-align:center;top:581px;">Auto Find</div>
<div style="left:414px;top:576px;width:75px;height:23px;background:#d4d0c8;box-shadow:inset -1px -1px #404040,inset 1px 1px #fff,inset -2px -2px #808080,inset 2px 2px #d4d0c8;"></div>
<div class="t" style="left:414px;width:75px;text-align:center;top:581px;letter-spacing:-0.5px;">BACK</div>
<div style="left:506px;top:588px;width:287px;height:11px;box-shadow:inset 1px 1px #808080,inset -1px -1px #fff;"></div>
</div></body></html>
